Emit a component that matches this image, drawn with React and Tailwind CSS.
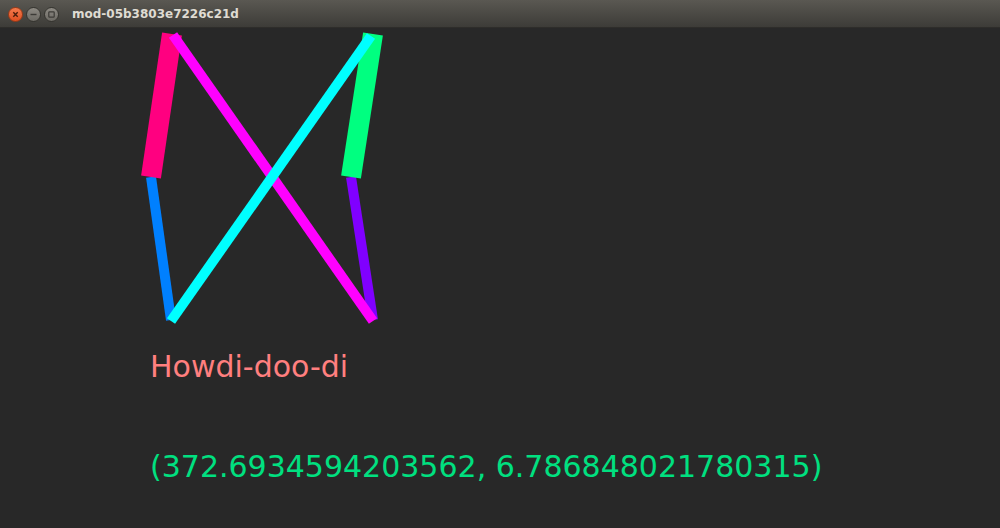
const lines = [
  { x1: 151, y1: 177, x2: 171, y2: 320, color: "#0080ff", w: 10 },
  { x1: 351, y1: 177, x2: 373, y2: 320, color: "#8000ff", w: 10 },
  { x1: 172, y1: 34, x2: 151, y2: 177, color: "#ff0080", w: 20 },
  { x1: 373, y1: 34, x2: 351, y2: 177, color: "#00ff80", w: 20 },
  { x1: 173, y1: 35, x2: 373, y2: 321, color: "#ff00ff", w: 10 },
  { x1: 171, y1: 321, x2: 371, y2: 36, color: "#00ffff", w: 10 },
];

const WindowButton = ({ kind }) => {
  const isClose = kind === "close";
  return (
    <div
      className={
        "w-[15px] h-[15px] rounded-full flex items-center justify-center border " +
        (isClose
          ? "bg-gradient-to-b from-[#f47a4c] to-[#df4f1f] border-[#9c3a17]"
          : "bg-gradient-to-b from-[#8d8a83] to-[#6c6a64] border-[#35342f]")
      }
    >
      <svg width="9" height="9" viewBox="0 0 9 9">
        {kind === "close" && (
          <path d="M2.3 2.3 L6.7 6.7 M6.7 2.3 L2.3 6.7" stroke="#4a1d0b" strokeWidth="1.4" />
        )}
        {kind === "min" && <path d="M1.5 4.5 H7.5" stroke="#3c3b37" strokeWidth="1.4" />}
        {kind === "max" && (
          <rect x="1.8" y="1.8" width="5.4" height="5.4" rx="0.8" fill="none" stroke="#3c3b37" strokeWidth="1.2" />
        )}
      </svg>
    </div>
  );
};

const App = () => {
  return (
    <div
      className="w-[1000px] h-[528px] bg-[#282828] flex flex-col overflow-hidden"
      style={{ fontFamily: '"DejaVu Sans", sans-serif' }}
    >
      <div className="h-[28px] flex items-center bg-gradient-to-b from-[#5a5852] to-[#3d3c38] border-b border-[#2e2d2a]">
        <div className="flex items-center gap-[3px] ml-[8px] mt-[2px]">
          <WindowButton kind="close" />
          <WindowButton kind="min" />
          <WindowButton kind="max" />
        </div>
        <span className="ml-[13px] text-[12px] font-bold text-[#dfdbd2]">
          mod-05b3803e7226c21d
        </span>
      </div>

      <svg width="260" height="305" viewBox="130 28 260 305" className="ml-[130px] block">
        {lines.map((l, i) => (
          <line
            key={i}
            x1={l.x1}
            y1={l.y1}
            x2={l.x2}
            y2={l.y2}
            stroke={l.color}
            strokeWidth={l.w}
          />
        ))}
      </svg>

      <p className="mt-[16px] pl-[150px] text-[30px] leading-[35px] text-[#ff7f7f]">
        Howdi-doo-di
      </p>
      <p className="mt-[65px] pl-[150px] text-[30px] leading-[35px] text-[#00e080]">
        (372.6934594203562, 6.786848021780315)
      </p>
    </div>
  );
};

export default App;
